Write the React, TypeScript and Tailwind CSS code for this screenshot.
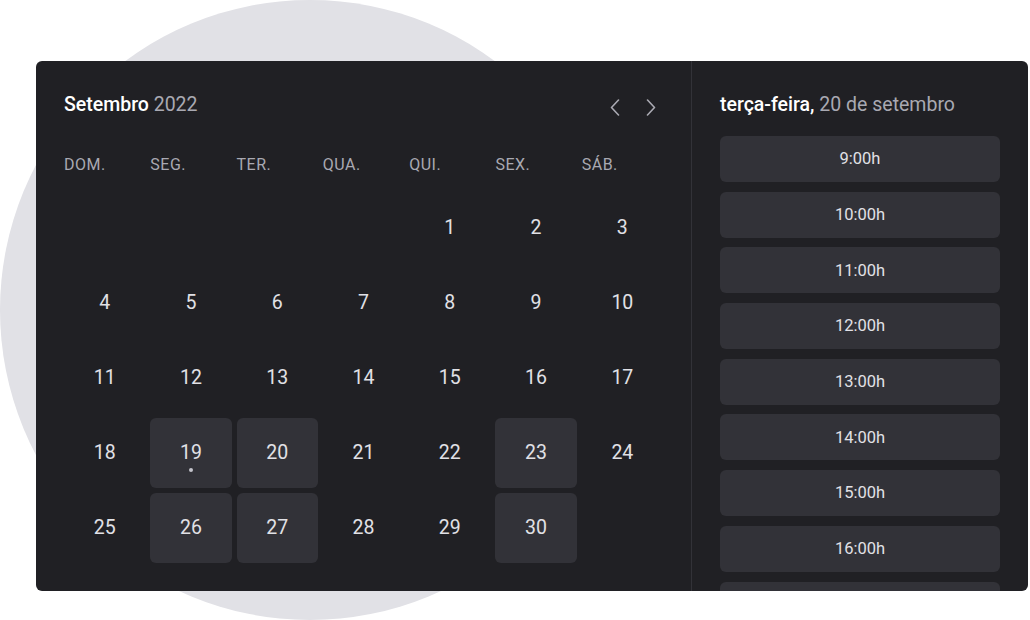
import React from 'react';

const weekDays = ['DOM.', 'SEG.', 'TER.', 'QUA.', 'QUI.', 'SEX.', 'SÁB.'];
const available = [19, 20, 23, 26, 27, 30];
const hours = [9, 10, 11, 12, 13, 14, 15, 16, 17];

// setembro de 2022 começa numa quinta-feira
const cells: (number | null)[] = [
  ...Array(4).fill(null),
  ...Array.from({ length: 30 }, (_, i) => i + 1),
  null,
];

const Chevron = ({ dir }: { dir: 'left' | 'right' }) => (
  <svg width="10" height="17" viewBox="0 0 10 17" fill="none">
    <path
      d={dir === 'left' ? 'M8.5 1 L1.5 8.5 L8.5 16' : 'M1.5 1 L8.5 8.5 L1.5 16'}
      stroke="#a9a9b2"
      strokeWidth="1.6"
      strokeLinecap="round"
      strokeLinejoin="round"
    />
  </svg>
);

const Calendar = () => (
  <div className="flex w-[655px] shrink-0 flex-col px-7 pt-[30px]">
    <div className="flex h-7 items-center justify-between">
      <span className="text-[19.5px] leading-7 font-medium text-white">
        Setembro <span className="font-normal text-[#a9a9b2]">2022</span>
      </span>
      <div className="mt-1 flex items-center gap-3">
        <button className="flex h-6 w-6 items-center justify-center">
          <Chevron dir="left" />
        </button>
        <button className="flex h-6 w-6 items-center justify-center">
          <Chevron dir="right" />
        </button>
      </div>
    </div>

    <div className="mt-[34px] grid grid-cols-7 gap-x-[5px]">
      {weekDays.map((d) => (
        <span
          key={d}
          className="text-[16px] leading-6 font-normal tracking-[0.5px] text-[#a9a9b2]"
        >
          {d}
        </span>
      ))}
    </div>

    <div className="mt-[16px] grid grid-cols-7 grid-rows-[repeat(5,70px)] gap-[5px]">
      {cells.map((day, i) => {
        const on = day !== null && available.includes(day);
        return (
          <div
            key={i}
            className={`relative flex items-center justify-center rounded-md text-[19.5px] text-[#e1e1e6] ${
              on ? 'bg-[#323238]' : ''
            }`}
          >
            {day}
            {day === 19 && (
              <span className="absolute top-[50px] left-1/2 h-[4px] w-[4px] -translate-x-1/2 rounded-full bg-[#c4c4cc]" />
            )}
          </div>
        );
      })}
    </div>
  </div>
);

const TimePicker = () => (
  <div className="flex flex-1 flex-col border-l border-[#323238] px-7 pt-[30px]">
    <span className="text-[19.5px] leading-7 font-medium text-white">
      terça-feira, <span className="font-normal text-[#a9a9b2]">20 de setembro</span>
    </span>
    <div className="mt-[17px] flex flex-col gap-[9.7px]">
      {hours.map((h) => (
        <button
          key={h}
          className="flex h-[46px] shrink-0 items-center justify-center rounded-md bg-[#323238] pt-px text-[16.5px] text-[#e1e1e6]"
        >
          {h}:00h
        </button>
      ))}
    </div>
  </div>
);

export default function App() {
  return (
    <div
      className="relative h-[620px] w-[1030px] overflow-hidden bg-white"
      style={{ fontFamily: 'Roboto, "Noto Sans", sans-serif' }}
    >
      <div className="absolute top-0 left-0 h-[620px] w-[620px] rounded-full bg-[#e1e1e6]" />
      <div className="relative pt-[61px] pl-[36px]">
        <div className="flex h-[530px] w-[992px] overflow-hidden rounded-md bg-[#202024]">
          <Calendar />
          <TimePicker />
        </div>
      </div>
    </div>
  );
}
